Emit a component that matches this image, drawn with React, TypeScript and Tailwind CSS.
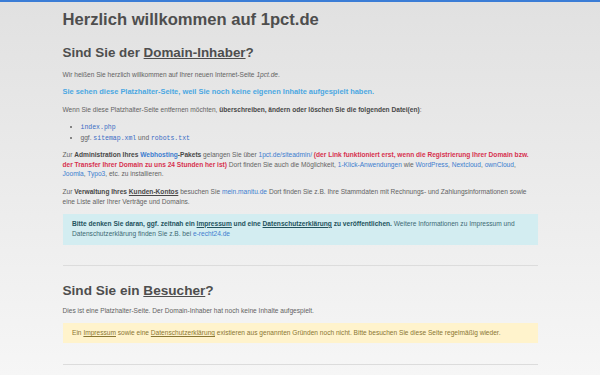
import React from "react";

const A = ({ children }: { children: React.ReactNode }) => (
  <a className="text-[#3d7dcf]">{children}</a>
);

const Code = ({ children }: { children: React.ReactNode }) => (
  <code className="font-['Liberation_Mono',monospace] text-[6.5px] text-[#3a6cc4]">
    {children}
  </code>
);

export default function App() {
  return (
    <div className="min-h-[375px] border-t-2 border-[#3b7dd6] bg-linear-to-b from-[#e1e1e1] to-[#f6f6f6] font-['Liberation_Sans',Arial,sans-serif] text-[#636363]">
      <div className="mx-auto w-[475px]">
        <h1 className="pt-[8px] text-[16.6px] leading-[20px] font-bold text-[#4e4e4e]">
          Herzlich willkommen auf 1pct.de
        </h1>

        <h2 className="mt-[15px] text-[13.4px] leading-[16px] font-bold text-[#4e4e4e]">
          Sind Sie der <span className="underline">Domain-Inhaber</span>?
        </h2>

        <div className="text-[6.6px] leading-[10px]">
          <p className="mt-[8.5px]">
            Wir heißen Sie herzlich willkommen auf Ihrer neuen Internet-Seite{" "}
            <i>1pct.de</i>.
          </p>

          <p className="mt-[7px] text-[7.45px] font-bold text-[#4ba8e2]">
            Sie sehen diese Platzhalter-Seite, weil Sie noch keine eigenen Inhalte aufgespielt haben.
          </p>

          <p className="mt-[8.5px]">
            Wenn Sie diese Platzhalter-Seite entfernen möchten,{" "}
            <b className="text-[#484848]">
              überschreiben, ändern oder löschen Sie die folgenden Datei(en)
            </b>
            :
          </p>

          <ul className="mt-[7px] list-disc pl-[18px]">
            <li>
              <Code>index.php</Code>
            </li>
            <li>
              ggf. <Code>sitemap.xml</Code> und <Code>robots.txt</Code>
            </li>
          </ul>

          <p className="mt-[6px] leading-[9.6px]">
            Zur <b className="text-[#484848]">Administration Ihres</b>{" "}
            <b className="text-[#3d7dcf]">Webhosting</b>
            <b className="text-[#484848]">-Pakets</b> gelangen Sie über{" "}
            <A>1pct.de/siteadmin/</A>{" "}
            <b className="text-[#d7314f]">
              (der Link funktioniert erst, wenn die Registrierung Ihrer Domain bzw. der Transfer Ihrer
              Domain zu uns 24 Stunden her ist)
            </b>{" "}
            Dort finden Sie auch die Möglichkeit, <A>1-Klick-Anwendungen</A> wie <A>WordPress</A>,{" "}
            <A>Nextcloud</A>, <A>ownCloud</A>, <A>Joomla</A>, <A>Typo3</A>, etc. zu installieren.
          </p>

          <p className="mt-[8px]">
            Zur <b className="text-[#484848]">Verwaltung Ihres</b>{" "}
            <b className="text-[#484848] underline">Kunden-Kontos</b> besuchen Sie{" "}
            <A>mein.manitu.de</A> Dort finden Sie z.B. Ihre Stammdaten mit Rechnungs- und
            Zahlungsinformationen sowie eine Liste aller Ihrer Verträge und Domains.
          </p>

          <div className="mt-[7.5px] bg-[#d3edf1] px-[9.5px] pt-[4.5px] pb-[6px] text-[#3d6a74]">
            <b className="text-[#23535d]">
              Bitte denken Sie daran, ggf. zeitnah ein <span className="underline">Impressum</span>{" "}
              und eine <span className="underline">Datenschutzerklärung</span> zu veröffentlichen.
            </b>{" "}
            Weitere Informationen zu Impressum und Datenschutzerklärung finden Sie z.B. bei{" "}
            <A>e-recht24.de</A>
          </div>

          <hr className="mt-[20px] border-t border-[#dcdcdc]" />
        </div>

        <h2 className="mt-[17px] text-[13.6px] leading-[16px] font-bold text-[#4e4e4e]">
          Sind Sie ein <span className="underline">Besucher</span>?
        </h2>

        <div className="text-[6.6px] leading-[10px]">
          <p className="mt-[7px]">
            Dies ist eine Platzhalter-Seite. Der Domain-Inhaber hat noch keine Inhalte aufgespielt.
          </p>

          <div className="mt-[7.5px] bg-[#fff3cc] px-[9.5px] py-[5px] text-[#8a7632]">
            Ein <span className="underline">Impressum</span> sowie eine{" "}
            <span className="underline">Datenschutzerklärung</span> existieren aus genannten Gründen
            noch nicht. Bitte besuchen Sie diese Seite regelmäßig wieder.
          </div>

          <hr className="mt-[21px] border-t border-[#dcdcdc]" />
        </div>
      </div>
    </div>
  );
}
